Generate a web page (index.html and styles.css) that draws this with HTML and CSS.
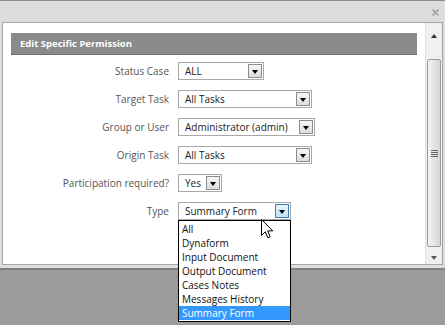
FILE: index.html
```html
<!DOCTYPE html>
<html>
<head>
<meta charset="utf-8">
<link rel="stylesheet" href="styles.css">
</head>
<body>
<div class="window">
  <div class="titlebar">
    <svg class="close" width="7" height="7" viewBox="0 0 7 7"><path d="M0.5 0.5L6.5 6.5M6.5 0.5L0.5 6.5" stroke="#9a9a9a" stroke-width="1.4"/></svg>
  </div>
  <div class="frame">
    <div class="content">
      <div class="panel-head">Edit Specific Permission</div>
      <div class="form">
        <div class="label">Status Case</div>
        <div class="sel w-status"><span class="sel-text">ALL</span><span class="sel-btn"><i class="tri"></i></span></div>

        <div class="label">Target Task</div>
        <div class="sel w-task"><span class="sel-text">All Tasks</span><span class="sel-btn"><i class="tri"></i></span></div>

        <div class="label">Group or User</div>
        <div class="sel w-group"><span class="sel-text">Administrator (admin)</span><span class="sel-btn"><i class="tri"></i></span></div>

        <div class="label">Origin Task</div>
        <div class="sel w-task"><span class="sel-text">All Tasks</span><span class="sel-btn"><i class="tri"></i></span></div>

        <div class="label">Participation required?</div>
        <div class="sel w-yes"><span class="sel-text">Yes</span><span class="sel-btn"><i class="tri"></i></span></div>

        <div class="label">Type</div>
        <div class="type-wrap">
          <div class="sel w-type"><span class="sel-text">Summary Form</span><span class="sel-btn hover"><i class="tri"></i></span></div>
          <ul class="dropdown">
            <li>All</li>
            <li>Dynaform</li>
            <li>Input Document</li>
            <li>Output Document</li>
            <li>Cases Notes</li>
            <li>Messages History</li>
            <li class="selected">Summary Form</li>
          </ul>
          <svg class="cursor" width="13" height="21" viewBox="0 0 13 21"><path d="M0.5 0.5V16.5L4.3 12.8L6.8 18.8L9.2 17.8L6.7 11.9H11.8Z" fill="#fff" stroke="#000" stroke-width="1" stroke-linejoin="round"/></svg>
        </div>
      </div>
    </div>
    <div class="scrollbar">
      <div class="arrow up"></div>
      <div class="thumb"><div class="grip"></div></div>
      <div class="arrow down"></div>
    </div>
  </div>
</div>
</body>
</html>
```

FILE: styles.css
```css
html, body {
  margin: 0;
  padding: 0;
}
body {
  background: #9b9b9b;
  font-family: "Open Sans", "DejaVu Sans", sans-serif;
  font-size: 10px;
  width: 445px;
  height: 325px;
  overflow: hidden;
}
.window {
  background: #dddddd;
  border-top: 1px solid #8c8c8c;
  border-bottom: 2px solid #808080;
  padding: 0 2px 3px 2px;
}
.titlebar {
  height: 21px;
  position: relative;
}
.close {
  position: absolute;
  right: 4px;
  top: 8px;
}
.frame {
  height: 243px;
  box-sizing: border-box;
  border: 1px solid #9aaaa6;
  background: #fff;
  display: flex;
}
.content {
  flex: 1;
  padding: 10px 8px 0 8px;
}
.panel-head {
  height: 22px;
  box-sizing: border-box;
  background: #8a8a8a;
  border-bottom: 1px solid #6f6f6f;
  color: #fff;
  font-weight: bold;
  font-size: 9.5px;
  line-height: 21px;
  padding-left: 9px;
}
.form {
  display: grid;
  grid-template-columns: 158px auto;
  column-gap: 9px;
  row-gap: 10px;
  margin-top: 7px;
  align-items: center;
  justify-items: start;
}
.label {
  justify-self: end;
  color: #555;
  line-height: 18px;
  white-space: nowrap;
}
.sel {
  height: 18px;
  box-sizing: border-box;
  border: 1px solid #a8a8a8;
  background: #fff;
  display: flex;
  align-items: center;
  color: #222;
}
.sel-text {
  flex: 1;
  padding-left: 6px;
  white-space: nowrap;
  overflow: hidden;
  line-height: 16px;
}
.sel-btn {
  width: 14px;
  height: 14px;
  box-sizing: border-box;
  margin-right: 1px;
  border: 1px solid #8d8d8d;
  background: linear-gradient(#f6f6f6, #dcdcdc);
  display: flex;
  align-items: center;
  justify-content: center;
}
.sel-btn.hover {
  border-color: #3c7fb1;
  background: linear-gradient(#e6f4fc, #bfe3f8);
}
.tri {
  width: 0;
  height: 0;
  border-left: 3.5px solid transparent;
  border-right: 3.5px solid transparent;
  border-top: 4px solid #000;
  margin-top: 1px;
}
.w-status { width: 86px; }
.w-task { width: 134px; }
.w-group { width: 137px; }
.w-yes { width: 44px; }
.w-type { width: 113px; }
.type-wrap {
  position: relative;
}
.dropdown {
  position: absolute;
  left: 0;
  top: 18px;
  width: 113px;
  box-sizing: border-box;
  margin: 0;
  padding: 1px 0 1px 0;
  list-style: none;
  background: #fff;
  border: 1px solid #000;
  z-index: 5;
}
.dropdown li {
  height: 14px;
  line-height: 14px;
  padding-left: 3px;
  color: #111;
  white-space: nowrap;
}
.dropdown li.selected {
  background: #3399ff;
  color: #fff;
}
.cursor {
  position: absolute;
  left: 83px;
  top: 17px;
  z-index: 6;
}
.scrollbar {
  width: 16px;
  border-left: 1px solid #dfe3e2;
  background: #f0f0f0;
  display: flex;
  flex-direction: column;
  align-items: center;
}
.arrow {
  width: 0;
  height: 0;
  border-left: 3.5px solid transparent;
  border-right: 3.5px solid transparent;
}
.arrow.up {
  border-bottom: 4px solid #333;
  margin-top: 11px;
}
.arrow.down {
  border-top: 4px solid #555;
  margin-bottom: 4px;
}
.thumb {
  width: 14px;
  flex: 1;
  box-sizing: border-box;
  margin: 21px 0 9px 0;
  border: 1px solid #9c9c9c;
  border-radius: 2px;
  background: linear-gradient(90deg, #f4f4f4, #e2e2e2 60%, #d6d6d6);
  display: flex;
  align-items: center;
  justify-content: center;
}
.grip {
  width: 7px;
  height: 7px;
  background: repeating-linear-gradient(#666 0 1px, transparent 1px 2px);
}
```
